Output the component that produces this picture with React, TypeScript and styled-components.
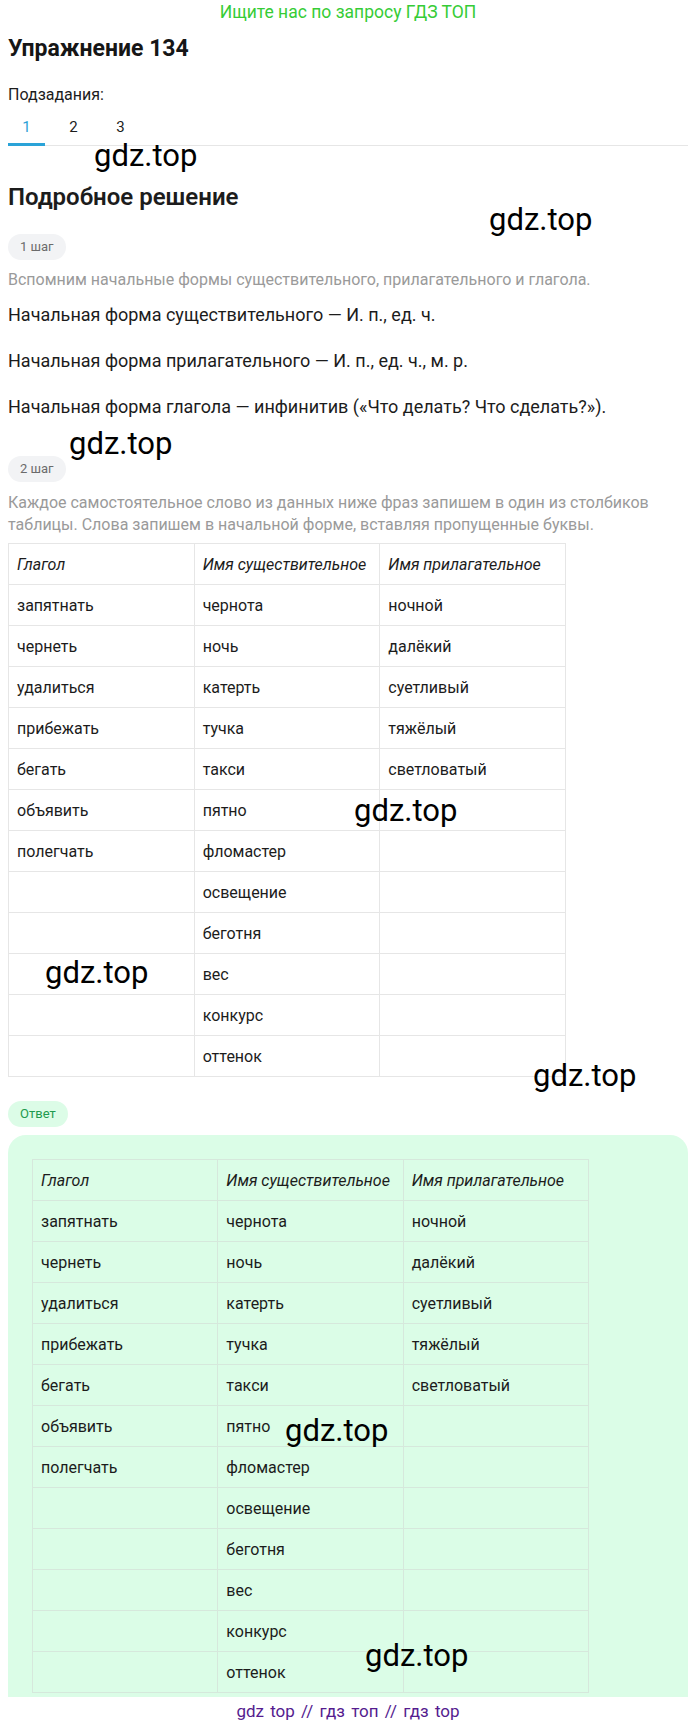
import React from "react";
import styled, { createGlobalStyle } from "styled-components";

const GlobalStyle = createGlobalStyle`
   html, body {
      margin: 0;
      padding: 0;
      background: #ffffff;
   }
   body {
      font-family: Roboto, "Noto Sans", "Liberation Sans", sans-serif;
      color: #1c1c1c;
   }
`;

type Row = [string, string, string];

const rows: Row[] = [
   ["запятнать", "чернота", "ночной"],
   ["чернеть", "ночь", "далёкий"],
   ["удалиться", "катерть", "суетливый"],
   ["прибежать", "тучка", "тяжёлый"],
   ["бегать", "такси", "светловатый"],
   ["объявить", "пятно", ""],
   ["полегчать", "фломастер", ""],
   ["", "освещение", ""],
   ["", "беготня", ""],
   ["", "вес", ""],
   ["", "конкурс", ""],
   ["", "оттенок", ""],
];

// watermark spots over the content
const marks = [
   { x: 94, y: 140 },
   { x: 489, y: 204 },
   { x: 69, y: 428 },
   { x: 354, y: 795 },
   { x: 45, y: 957 },
   { x: 533, y: 1060 },
   { x: 285, y: 1415 },
   { x: 365, y: 1640 },
];

const WordsTable = ({ answer }: { answer?: boolean }): JSX.Element => (
   <Table $answer={answer}>
      <thead>
         <tr>
            <Th>Глагол</Th>
            <Th>Имя существительное</Th>
            <Th>Имя прилагательное</Th>
         </tr>
      </thead>
      <tbody>
         {rows.map((r, i) => (
            <tr key={i}>
               {r.map((c, j) => (
                  <Td key={j}>{c}</Td>
               ))}
            </tr>
         ))}
      </tbody>
   </Table>
);

const App = (): JSX.Element => {
   return (
      <>
         <GlobalStyle />
         <Page>
            <Banner>Ищите нас по запросу ГДЗ ТОП</Banner>
            <Title>Упражнение 134</Title>
            <SubLabel>Подзадания:</SubLabel>
            <Tabs>
               <Tab $active>1</Tab>
               <Tab>2</Tab>
               <Tab>3</Tab>
            </Tabs>

            <SectionTitle>Подробное решение</SectionTitle>

            <StepBadge>1 шаг</StepBadge>
            <Hint>Вспомним начальные формы существительного, прилагательного и глагола.</Hint>
            <Para $first>Начальная форма существительного — И. п., ед. ч.</Para>
            <Para>Начальная форма прилагательного — И. п., ед. ч., м. р.</Para>
            <Para>Начальная форма глагола — инфинитив («Что делать? Что сделать?»).</Para>

            <StepBadge $gap={37}>2 шаг</StepBadge>
            <Hint $gap={10}>
               Каждое самостоятельное слово из данных ниже фраз запишем в один из столбиков таблицы.
               Слова запишем в начальной форме, вставляя пропущенные буквы.
            </Hint>
            <WordsTable />

            <AnswerBadge>Ответ</AnswerBadge>
            <AnswerBox>
               <WordsTable answer />
            </AnswerBox>

            <Footer>gdz top // гдз топ // гдз top</Footer>

            {marks.map((m, i) => (
               <Watermark key={i} style={{ left: m.x, top: m.y }}>
                  gdz.top
               </Watermark>
            ))}
         </Page>
      </>
   );
};

export default App;

const Page = styled.div`
   position: relative;
   width: 700px;
   padding: 0 12px 0 8px;
   box-sizing: border-box;
`;

const Banner = styled.div`
   height: 24px;
   line-height: 24px;
   text-align: center;
   font-size: 17.5px;
   color: #36cc36;
`;

const Title = styled.h1`
   margin: 11px 0 0;
   font-size: 23px;
   line-height: 28px;
   font-weight: 700;
   color: #161616;
`;

const SubLabel = styled.div`
   margin-top: 22px;
   font-size: 16px;
   line-height: 20px;
`;

const Tabs = styled.div`
   display: flex;
   gap: 10px;
   border-bottom: 1px solid #e6e6e6;
`;

const Tab = styled.div<{ $active?: boolean }>`
   width: 37px;
   padding: 12px 0 6px;
   margin-bottom: -1px;
   text-align: center;
   font-size: 15px;
   line-height: 20px;
   color: ${(p) => (p.$active ? "#2a9fd6" : "#1c1c1c")};
   border-bottom: 3px solid ${(p) => (p.$active ? "#2aa3d8" : "transparent")};
`;

const SectionTitle = styled.h2`
   margin: 37px 0 0;
   font-size: 24px;
   line-height: 28px;
   font-weight: 600;
`;

const StepBadge = styled.div<{ $gap?: number }>`
   display: inline-block;
   margin-top: ${(p) => p.$gap ?? 23}px;
   padding: 0 12px;
   height: 26px;
   line-height: 26px;
   border-radius: 13px;
   background: #f2f3f5;
   color: #6b6b6b;
   font-size: 13px;
`;

const Hint = styled.p<{ $gap?: number }>`
   margin: ${(p) => p.$gap ?? 9}px 0 0;
   font-size: 16px;
   line-height: 22px;
   color: #9a9a9a;
`;

const Para = styled.p<{ $first?: boolean }>`
   margin: ${(p) => (p.$first ? 12 : 22)}px 0 0;
   font-size: 18px;
   line-height: 24px;
   color: #1c1c1c;
`;

const Table = styled.table<{ $answer?: boolean }>`
   margin-top: ${(p) => (p.$answer ? 0 : 7)}px;
   border-collapse: collapse;
   table-layout: fixed;
   width: ${(p) => (p.$answer ? 557 : 558)}px;
   font-size: 16px;

   th,
   td {
      border: 1px solid ${(p) => (p.$answer ? "#d6e8dc" : "#e6e6e6")};
   }
`;

const Th = styled.th`
   height: 41px;
   padding: 0 8px;
   text-align: left;
   font-weight: 400;
   font-style: italic;
   box-sizing: border-box;
`;

const Td = styled.td`
   height: 41px;
   padding: 0 8px;
   box-sizing: border-box;
`;

const AnswerBadge = styled.div`
   display: inline-block;
   margin-top: 24px;
   padding: 0 12px;
   height: 26px;
   line-height: 26px;
   border-radius: 13px;
   background: #dcfce7;
   color: #1f9a4e;
   font-size: 13px;
`;

const AnswerBox = styled.div`
   margin-top: 8px;
   padding: 24px 24px 4px;
   background: #dbfde7;
   border-radius: 18px 18px 0 0;
`;

const Footer = styled.div`
   height: 28px;
   line-height: 28px;
   text-align: center;
   font-size: 17px;
   color: #551c8f;
   word-spacing: 2px;
`;

const Watermark = styled.div`
   position: absolute;
   font-family: Roboto, "Liberation Sans", sans-serif;
   font-size: 31px;
   line-height: 32px;
   color: #000000;
   pointer-events: none;
`;
